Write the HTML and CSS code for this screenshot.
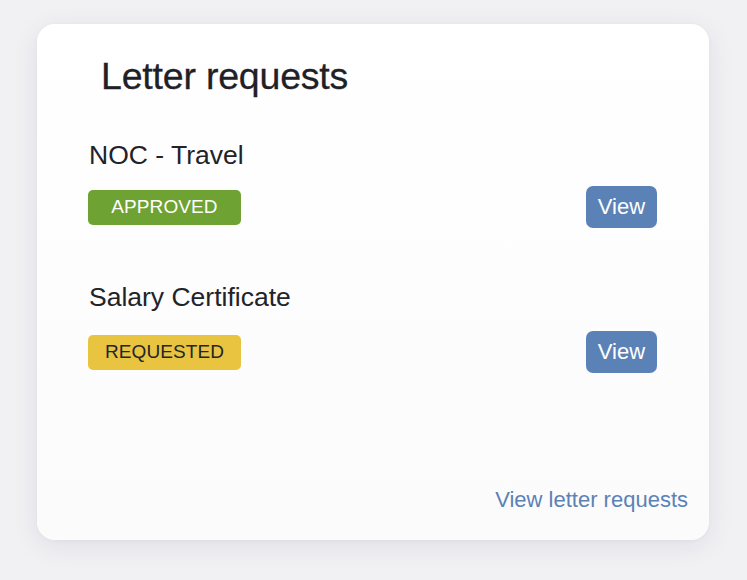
FILE: index.html
```html
<!DOCTYPE html>
<html lang="en">
<head>
<meta charset="utf-8">
<title>Letter requests</title>
<link rel="stylesheet" href="styles.css">
</head>
<body>
<section class="card">
  <h1 class="card-title">Letter requests</h1>
  <div class="list">
    <div class="item">
      <div class="item-name">NOC - Travel</div>
      <div class="item-row">
        <span class="badge badge-approved">APPROVED</span>
        <button class="btn-view" type="button">View</button>
      </div>
    </div>
    <div class="item">
      <div class="item-name">Salary Certificate</div>
      <div class="item-row">
        <span class="badge badge-requested">REQUESTED</span>
        <button class="btn-view" type="button">View</button>
      </div>
    </div>
  </div>
  <div class="card-footer">
    <a class="footer-link" href="#">View letter requests</a>
  </div>
</section>
</body>
</html>
```

FILE: styles.css
```css
html, body {
  margin: 0;
  padding: 0;
}

body {
  background: #f1f1f4;
  font-family: "Liberation Sans", Arial, Helvetica, sans-serif;
  padding: 24px 38px 40px 37px;
  height: 580px;
  box-sizing: border-box;
}

.card {
  box-sizing: border-box;
  width: 672px;
  height: 516px;
  background: linear-gradient(to bottom, #ffffff 0%, #fbfbfb 100%);
  border-radius: 18px;
  box-shadow: 0 6px 28px rgba(30, 30, 60, 0.08), 0 1px 4px rgba(30, 30, 60, 0.04);
  padding: 30px 21px 27px 51px;
  display: flex;
  flex-direction: column;
}

.card-title {
  margin: 0 0 41px 13px;
  font-size: 37.5px;
  line-height: 44px;
  font-weight: 400;
  color: #1f2126;
  letter-spacing: -0.2px;
  -webkit-text-stroke: 0.3px #1f2126;
}

.list {
  display: flex;
  flex-direction: column;
  gap: 53px;
  padding-right: 31px;
}

.item {
  display: flex;
  flex-direction: column;
  gap: 15px;
}

.item + .item {
  gap: 18px;
}

.item-name {
  font-size: 26.5px;
  line-height: 32px;
  color: #212328;
  padding-left: 1px;
}

.item-row {
  display: flex;
  align-items: center;
  justify-content: space-between;
  height: 42px;
}

.badge {
  box-sizing: border-box;
  width: 153px;
  height: 35px;
  border-radius: 5px;
  display: flex;
  align-items: center;
  justify-content: center;
  font-size: 19px;
  letter-spacing: 0.1px;
}

.badge-approved {
  background: #6ea232;
  color: #ffffff;
}

.badge-requested {
  background: #e8c440;
  color: #23252a;
}

.btn-view {
  box-sizing: border-box;
  width: 71px;
  height: 42px;
  border: 0;
  border-radius: 7px;
  background: #5b82b6;
  color: #ffffff;
  font-family: "Liberation Sans", Arial, Helvetica, sans-serif;
  font-size: 22px;
  padding: 0;
  cursor: pointer;
}

.card-footer {
  margin-top: auto;
  display: flex;
  justify-content: flex-end;
}

.footer-link {
  font-size: 22px;
  line-height: 26px;
  color: #5b82b6;
  text-decoration: none;
}
```
